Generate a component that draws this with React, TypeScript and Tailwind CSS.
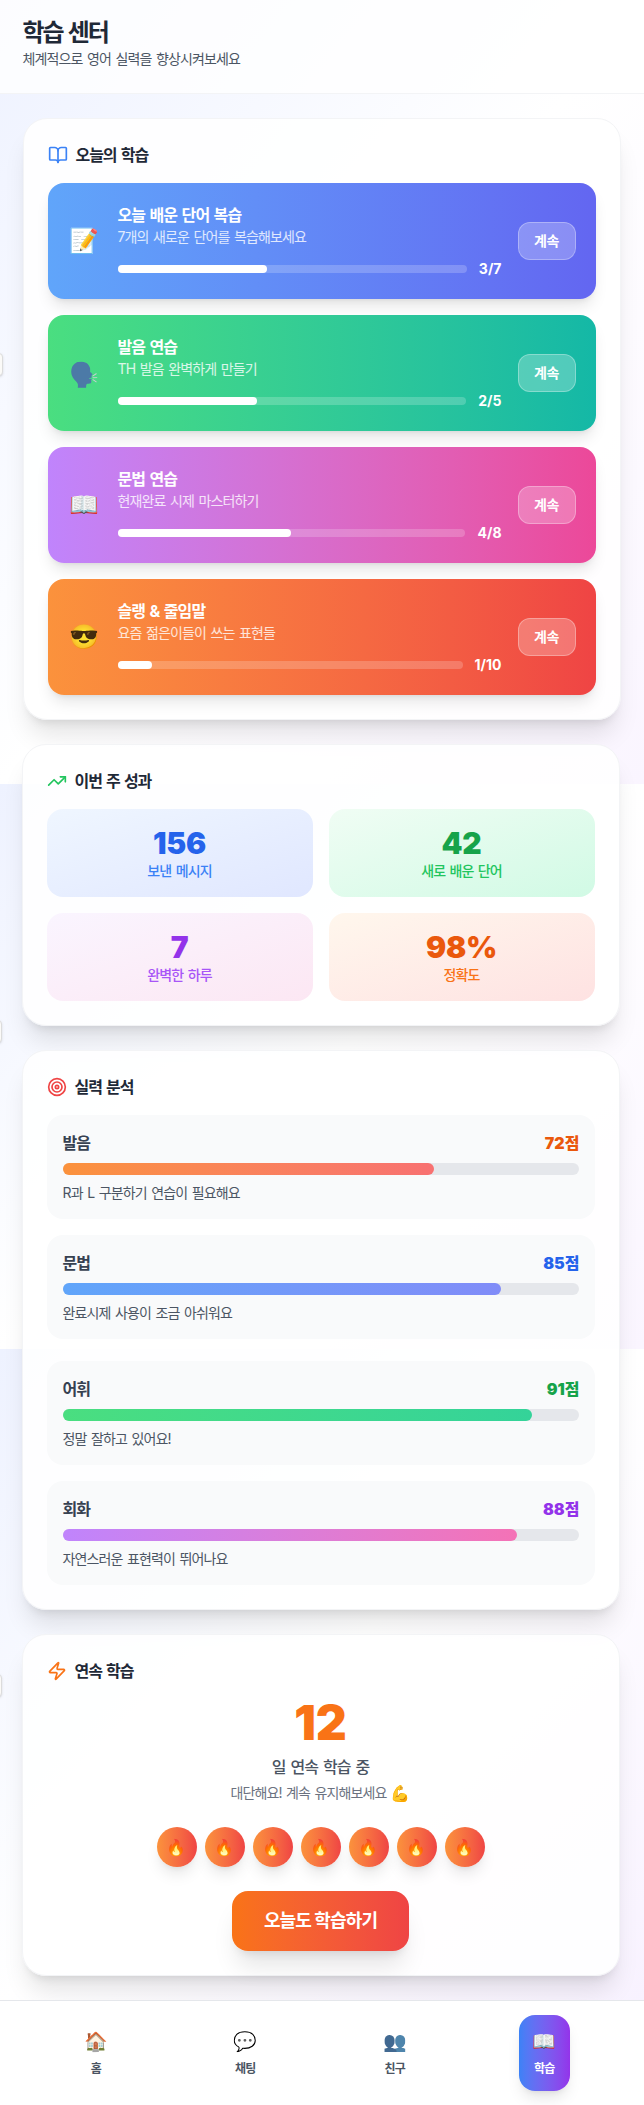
import React from "react";
import { BookOpen, TrendingUp, Target, Zap } from "lucide-react";

const lessons = [
  { icon: "📝", iconFx: "", title: "오늘 배운 단어 복습", desc: "7개의 새로운 단어를 복습해보세요", done: 3, total: 7, tone: "from-[#60a5fa] to-[#6366f1]" },
  { icon: "🗣️", iconFx: "pt-1 saturate-[.45] brightness-110", title: "발음 연습", desc: "TH 발음 완벽하게 만들기", done: 2, total: 5, tone: "from-[#4ade80] to-[#14b8a6]" },
  { icon: "📖", iconFx: "", title: "문법 연습", desc: "현재완료 시제 마스터하기", done: 4, total: 8, tone: "from-[#c084fc] to-[#ec4899]" },
  { icon: "😎", iconFx: "", title: "슬랭 & 줄임말", desc: "요즘 젊은이들이 쓰는 표현들", done: 1, total: 10, tone: "from-[#fb923c] to-[#ef4444]" },
];

const stats = [
  { value: "156", label: "보낸 메시지", box: "from-[#eff6ff] to-[#e0e7ff]", num: "text-[#2563eb]", text: "text-[#3b82f6]" },
  { value: "42", label: "새로 배운 단어", box: "from-[#f0fdf4] to-[#d1fae5]", num: "text-[#16a34a]", text: "text-[#22c55e]" },
  { value: "7", label: "완벽한 하루", box: "from-[#faf5ff] to-[#fce7f3]", num: "text-[#9333ea]", text: "text-[#a855f7]" },
  { value: "98%", label: "정확도", box: "from-[#fff7ed] to-[#fee2e2]", num: "text-[#ea580c]", text: "text-[#f97316]" },
];

const skills = [
  { name: "발음", score: 72, note: "R과 L 구분하기 연습이 필요해요", bar: "from-[#fb923c] to-[#f87171]", text: "text-[#ea580c]", gap: "" },
  { name: "문법", score: 85, note: "완료시제 사용이 조금 아쉬워요", bar: "from-[#60a5fa] to-[#818cf8]", text: "text-[#2563eb]", gap: "" },
  { name: "어휘", score: 91, note: "정말 잘하고 있어요!", bar: "from-[#4ade80] to-[#34d399]", text: "text-[#16a34a]", gap: "mt-1.5" },
  { name: "회화", score: 88, note: "자연스러운 표현력이 뛰어나요", bar: "from-[#c084fc] to-[#f472b6]", text: "text-[#9333ea]", gap: "" },
];

const tabs = [
  { icon: "🏠", iconFx: "", label: "홈", active: false },
  { icon: "💬", iconFx: "grayscale", label: "채팅", active: false },
  { icon: "👥", iconFx: "saturate-[.45] brightness-95", label: "친구", active: false },
  { icon: "📖", iconFx: "", label: "학습", active: true },
];

function Card({ className = "", icon, title, children }: { className?: string; icon: React.ReactNode; title: string; children: React.ReactNode }) {
  return (
    <section className={"w-[598px] rounded-3xl border border-[#f3f4f6] bg-white/90 p-6 shadow-[0_20px_25px_-5px_rgba(0,0,0,0.1),0_8px_10px_-6px_rgba(0,0,0,0.1)] " + className}>
      <h2 className="mb-4 flex h-6 items-center gap-2 text-base font-bold tracking-[-0.065em] text-[#1f2937]">
        {icon}
        {title}
      </h2>
      {children}
    </section>
  );
}

function Backdrop() {
  return (
    <div className="absolute inset-0 flex flex-col">
      <div className="h-[784px] bg-gradient-to-br from-[#eef2ff] via-white to-[#faf5ff]" />
      <div className="h-[565px] bg-gradient-to-br from-[#eef2ff] via-white to-[#faf5ff]" />
      <div className="h-[655px] bg-gradient-to-br from-[#eef2ff] via-white to-[#f8f2ff]" />
      <div className="absolute -left-5 top-[353px] h-[23px] w-[23px] rounded border border-[#dcdcdc] bg-[#fbfaf8] shadow-sm" />
      <div className="absolute -left-5 top-[1020px] h-[23px] w-[22px] rounded border border-[#dcdcdc] bg-[#fbfaf8] shadow-sm" />
      <div className="absolute -left-5 top-[1674px] h-[23px] w-[22px] rounded border border-[#dcdcdc] bg-[#fbfaf8] shadow-sm" />
    </div>
  );
}

export default function App() {
  return (
    <div className="relative h-[2105px] w-[644px] overflow-hidden bg-white font-[Inter,'Noto_Sans_CJK_KR','Noto_Color_Emoji',sans-serif] tracking-[-0.055em] [word-spacing:0.09em]">
      <Backdrop />
      <div className="relative flex h-full flex-col">
        <header className="h-[94px] border-b border-[#f3f4f6] bg-white/80 pl-[22.5px] pt-[17px]">
          <h1 className="text-2xl font-bold tracking-[-0.085em] text-[#1f2937]">학습 센터</h1>
          <p className="text-sm text-[#4b5563]">체계적으로 영어 실력을 향상시켜보세요</p>
        </header>

        <main className="flex flex-1 flex-col gap-6 pl-[21.5px] pt-6">
          <Card className="ml-px" icon={<BookOpen className="size-5 text-[#3b82f6]" />} title="오늘의 학습">
            <div className="flex flex-col gap-4">
              {lessons.map((l) => (
                <div key={l.title} className={"flex h-[116px] items-center gap-4 rounded-2xl bg-gradient-to-r p-5 text-white shadow-[0_10px_15px_-3px_rgba(0,0,0,0.1),0_4px_6px_-4px_rgba(0,0,0,0.1)] " + l.tone}>
                  <span className={"flex w-[34px] justify-center text-[24px] tracking-normal " + l.iconFx}>{l.icon}</span>
                  <div className="min-w-0 flex-1">
                    <h3 className="text-base font-bold">{l.title}</h3>
                    <p className="mb-3 text-sm text-white/80">{l.desc}</p>
                    <div className="flex items-center gap-3">
                      <div className="h-2 flex-1 rounded-full bg-white/20">
                        <div className="h-2 rounded-full bg-white" style={{ width: `${(l.done / l.total) * 100}%` }} />
                      </div>
                      <span className="text-sm font-bold tracking-normal">{l.done}/{l.total}</span>
                    </div>
                  </div>
                  <button className="h-[38px] w-[58px] rounded-xl border border-white/30 bg-white/25 text-sm font-bold tracking-[-0.03em]">계속</button>
                </div>
              ))}
            </div>
          </Card>

          <Card icon={<TrendingUp className="size-5 text-[#22c55e]" />} title="이번 주 성과">
            <div className="grid grid-cols-2 gap-4">
              {stats.map((s) => (
                <div key={s.label} className={"rounded-2xl bg-gradient-to-br p-4 text-center " + s.box}>
                  <div className={"text-3xl font-black tracking-[-0.01em] " + s.num}>{s.value}</div>
                  <div className={"text-sm font-medium " + s.text}>{s.label}</div>
                </div>
              ))}
            </div>
          </Card>

          <Card icon={<Target className="size-5 text-[#ef4444]" />} title="실력 분석">
            <div className="flex flex-col gap-4">
              {skills.map((s) => (
                <div key={s.name} className={"rounded-2xl bg-[#f9fafb] p-4 " + s.gap}>
                  <div className="mb-2 flex items-center justify-between">
                    <span className="font-bold text-[#374151]">{s.name}</span>
                    <span className={"font-black " + s.text}><span className="tracking-normal">{s.score}</span>점</span>
                  </div>
                  <div className="mb-2 h-3 rounded-full bg-[#e5e7eb]">
                    <div className={"h-3 rounded-full bg-gradient-to-r " + s.bar} style={{ width: `${s.score}%` }} />
                  </div>
                  <p className="text-sm text-[#4b5563]">{s.note}</p>
                </div>
              ))}
            </div>
          </Card>

          <Card icon={<Zap className="size-5 text-[#f97316]" />} title="연속 학습">
            <div className="flex flex-col items-center">
              <div className="mb-2 text-5xl leading-[48px] font-black tracking-normal text-[#f97316]">12</div>
              <p className="font-medium text-[#4b5563]">일 연속 학습 중</p>
              <p className="mt-1 flex h-5 items-center gap-1 text-sm text-[#6b7280]">
                <span>대단해요! 계속 유지해보세요</span>
                <span className="text-base leading-5 tracking-normal">💪</span>
              </p>
              <div className="mt-6 flex gap-2">
                {[0, 1, 2, 3, 4, 5, 6].map((d) => (
                  <div key={d} className="flex size-10 items-center justify-center rounded-full bg-gradient-to-r from-[#fb923c] to-[#ef4444] text-base tracking-normal shadow-lg">🔥</div>
                ))}
              </div>
              <button className="mt-6 h-[60px] w-[177px] rounded-2xl bg-gradient-to-r from-[#f97316] to-[#ef4444] text-lg font-bold text-white shadow-xl">오늘도 학습하기</button>
            </div>
          </Card>
        </main>

        <nav className="grid h-[105px] grid-cols-4 justify-items-center border-t border-[#e5e7eb] bg-white/95 pl-[21px] pr-[25px] pt-3.5">
          {tabs.map((t) => (
            <div key={t.label} className={"flex h-[76px] w-[51px] flex-col items-center rounded-2xl pt-[11px] " + (t.active ? "bg-gradient-to-r from-[#3b82f6] to-[#9333ea] text-white shadow-lg" : "text-[#4b5563]")}>
              <span className={"h-8 text-[19px] leading-8 tracking-normal " + t.iconFx}>{t.icon}</span>
              <span className="mt-[3px] text-xs font-bold">{t.label}</span>
            </div>
          ))}
        </nav>
      </div>
    </div>
  );
}
